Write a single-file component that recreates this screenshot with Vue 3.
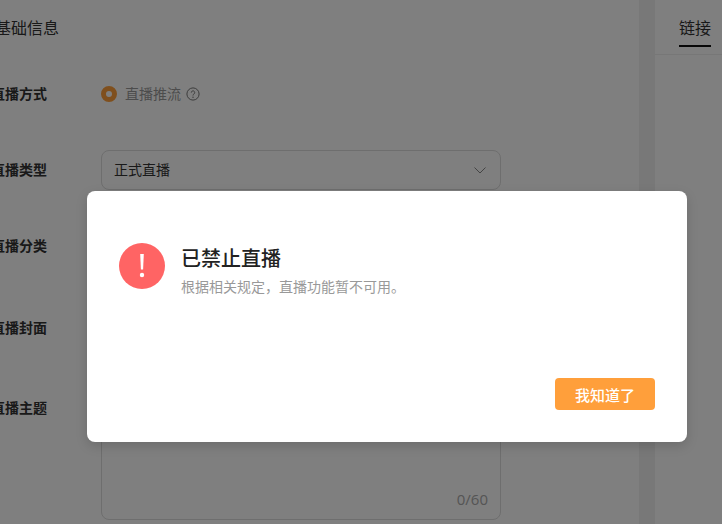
<template>
  <div class="page">
    <div class="main-panel">
      <div class="panel-title">基础信息</div>
      <div class="form">
        <div class="form-row">
          <span class="label">直播方式</span>
          <span class="radio"></span>
          <span class="radio-text">直播推流</span>
          <svg class="help" width="14" height="14" viewBox="0 0 14 14" fill="none">
            <circle cx="7" cy="7" r="6.1" stroke="#777" stroke-width="1" />
            <path d="M5.3 5.6a1.7 1.7 0 1 1 2.6 1.4c-.6.4-.9.8-.9 1.5" stroke="#777" stroke-width="1" />
            <circle cx="7" cy="10.3" r=".7" fill="#777" />
          </svg>
        </div>
        <div class="form-row">
          <span class="label">直播类型</span>
          <div class="select">
            <span class="select-text">正式直播</span>
            <svg width="12" height="7" viewBox="0 0 12 7" fill="none">
              <path d="M.5.5L6 6 11.5.5" stroke="#888" stroke-width="1" />
            </svg>
          </div>
        </div>
        <div class="form-row">
          <span class="label">直播分类</span>
          <div class="select"></div>
        </div>
        <div class="form-row cover-row">
          <span class="label">直播封面</span>
        </div>
        <div class="form-row topic-row">
          <span class="label">直播主题</span>
          <div class="textarea">
            <span class="count">0/60</span>
          </div>
        </div>
      </div>
    </div>
    <div class="side-panel">
      <div class="tabs">
        <span class="tab">链接</span>
      </div>
    </div>

    <div class="mask">
      <div class="dialog">
        <div class="dialog-body">
          <div class="warn-icon">
            <svg width="8" height="24" viewBox="0 0 8 24">
              <path d="M2.2 0h3.6l-.7 15.500H2.900z" fill="#fff" />
              <circle cx="4" cy="21" r="2.2" fill="#fff" />
            </svg>
          </div>
          <div class="dialog-text">
            <div class="dialog-title">已禁止直播</div>
            <div class="dialog-desc">根据相关规定，直播功能暂不可用。</div>
          </div>
        </div>
        <div class="dialog-footer">
          <button class="ok-btn">我知道了</button>
        </div>
      </div>
    </div>
  </div>
</template>

<script setup>
</script>

<style>
html,
body {
  margin: 0;
  overflow: hidden;
}
</style>

<style scoped>
.page {
  position: relative;
  display: flex;
  height: 524px;
  width: 722px;
  overflow: hidden;
  background: #f0f0f0;
  font-family: "Noto Sans CJK SC", "Noto Sans", sans-serif;
  color: #333;
}

.main-panel {
  flex: none;
  width: 639px;
  height: 100%;
  background: #fff;
}

.panel-title {
  height: 55px;
  line-height: 54px;
  margin-left: -5px;
  font-size: 16px;
  color: #333;
}

.form {
  padding-top: 19px;
  margin-left: -9px;
}

.form-row {
  display: flex;
  align-items: center;
  height: 40px;
  margin-bottom: 36px;
}

.cover-row {
  height: 52px;
  margin-bottom: 44px;
}

.topic-row {
  height: 122px;
  align-items: flex-start;
  margin-bottom: 0;
}

.topic-row .label {
  line-height: 18px;
}

.label {
  flex: none;
  width: 110px;
  padding-bottom: 2px;
  font-size: 14px;
  font-weight: 700;
  color: #333;
}

.radio {
  box-sizing: border-box;
  width: 16px;
  height: 16px;
  border: 5px solid #ff9f3b;
  border-radius: 50%;
  background: #fff;
  margin-right: 8px;
}

.radio-text {
  padding-bottom: 2px;
  font-size: 14px;
  color: #999;
  margin-right: 5px;
}

.help {
  display: block;
}

.select {
  box-sizing: border-box;
  display: flex;
  align-items: center;
  justify-content: space-between;
  width: 400px;
  height: 40px;
  padding: 0 14px 0 12px;
  border: 1px solid #dcdcdc;
  border-radius: 8px;
  font-size: 14px;
  color: #333;
}

.select-text {
  padding-bottom: 2px;
}

.textarea {
  box-sizing: border-box;
  position: relative;
  width: 400px;
  height: 122px;
  border: 1px solid #dcdcdc;
  border-radius: 8px;
}

.count {
  position: absolute;
  right: 12px;
  bottom: 10px;
  font-family: "Open Sans", sans-serif;
  font-size: 15px;
  line-height: 20px;
  color: #aaa;
}

.side-panel {
  flex: none;
  width: 67px;
  margin-left: 16px;
  background: #fff;
}

.tabs {
  height: 55px;
  padding-left: 24px;
  border-bottom: 1px solid #eee;
  box-sizing: border-box;
}

.tab {
  display: inline-block;
  height: 45px;
  line-height: 54px;
  font-size: 16px;
  color: #333;
  border-bottom: 2px solid #111;
}

.mask {
  position: absolute;
  inset: 0;
  background: rgba(0, 0, 0, 0.5);
}

.dialog {
  box-sizing: border-box;
  width: 600px;
  height: 251px;
  margin: 191px 0 0 87px;
  padding: 52px 32px 32px;
  display: flex;
  flex-direction: column;
  justify-content: space-between;
  background: #fff;
  border-radius: 8px;
  box-shadow: 0 4px 12px rgba(0, 0, 0, 0.15);
}

.dialog-body {
  display: flex;
  align-items: flex-start;
  gap: 16px;
}

.warn-icon {
  flex: none;
  display: flex;
  align-items: center;
  justify-content: center;
  width: 46px;
  height: 46px;
  border-radius: 50%;
  background: #ff6464;
}

.warn-icon svg {
  display: block;
}

.dialog-title {
  font-size: 20px;
  font-weight: 500;
  line-height: 28px;
  margin-top: 1px;
  color: #222;
}

.dialog-desc {
  margin-top: 4px;
  font-size: 14px;
  line-height: 20px;
  color: #999;
}

.dialog-footer {
  display: flex;
  justify-content: flex-end;
}

.ok-btn {
  width: 100px;
  height: 32px;
  padding: 0;
  border: none;
  border-radius: 4px;
  background: #ff9f3b;
  color: #fff;
  font-family: inherit;
  font-size: 15px;
  font-weight: 500;
}
</style>
